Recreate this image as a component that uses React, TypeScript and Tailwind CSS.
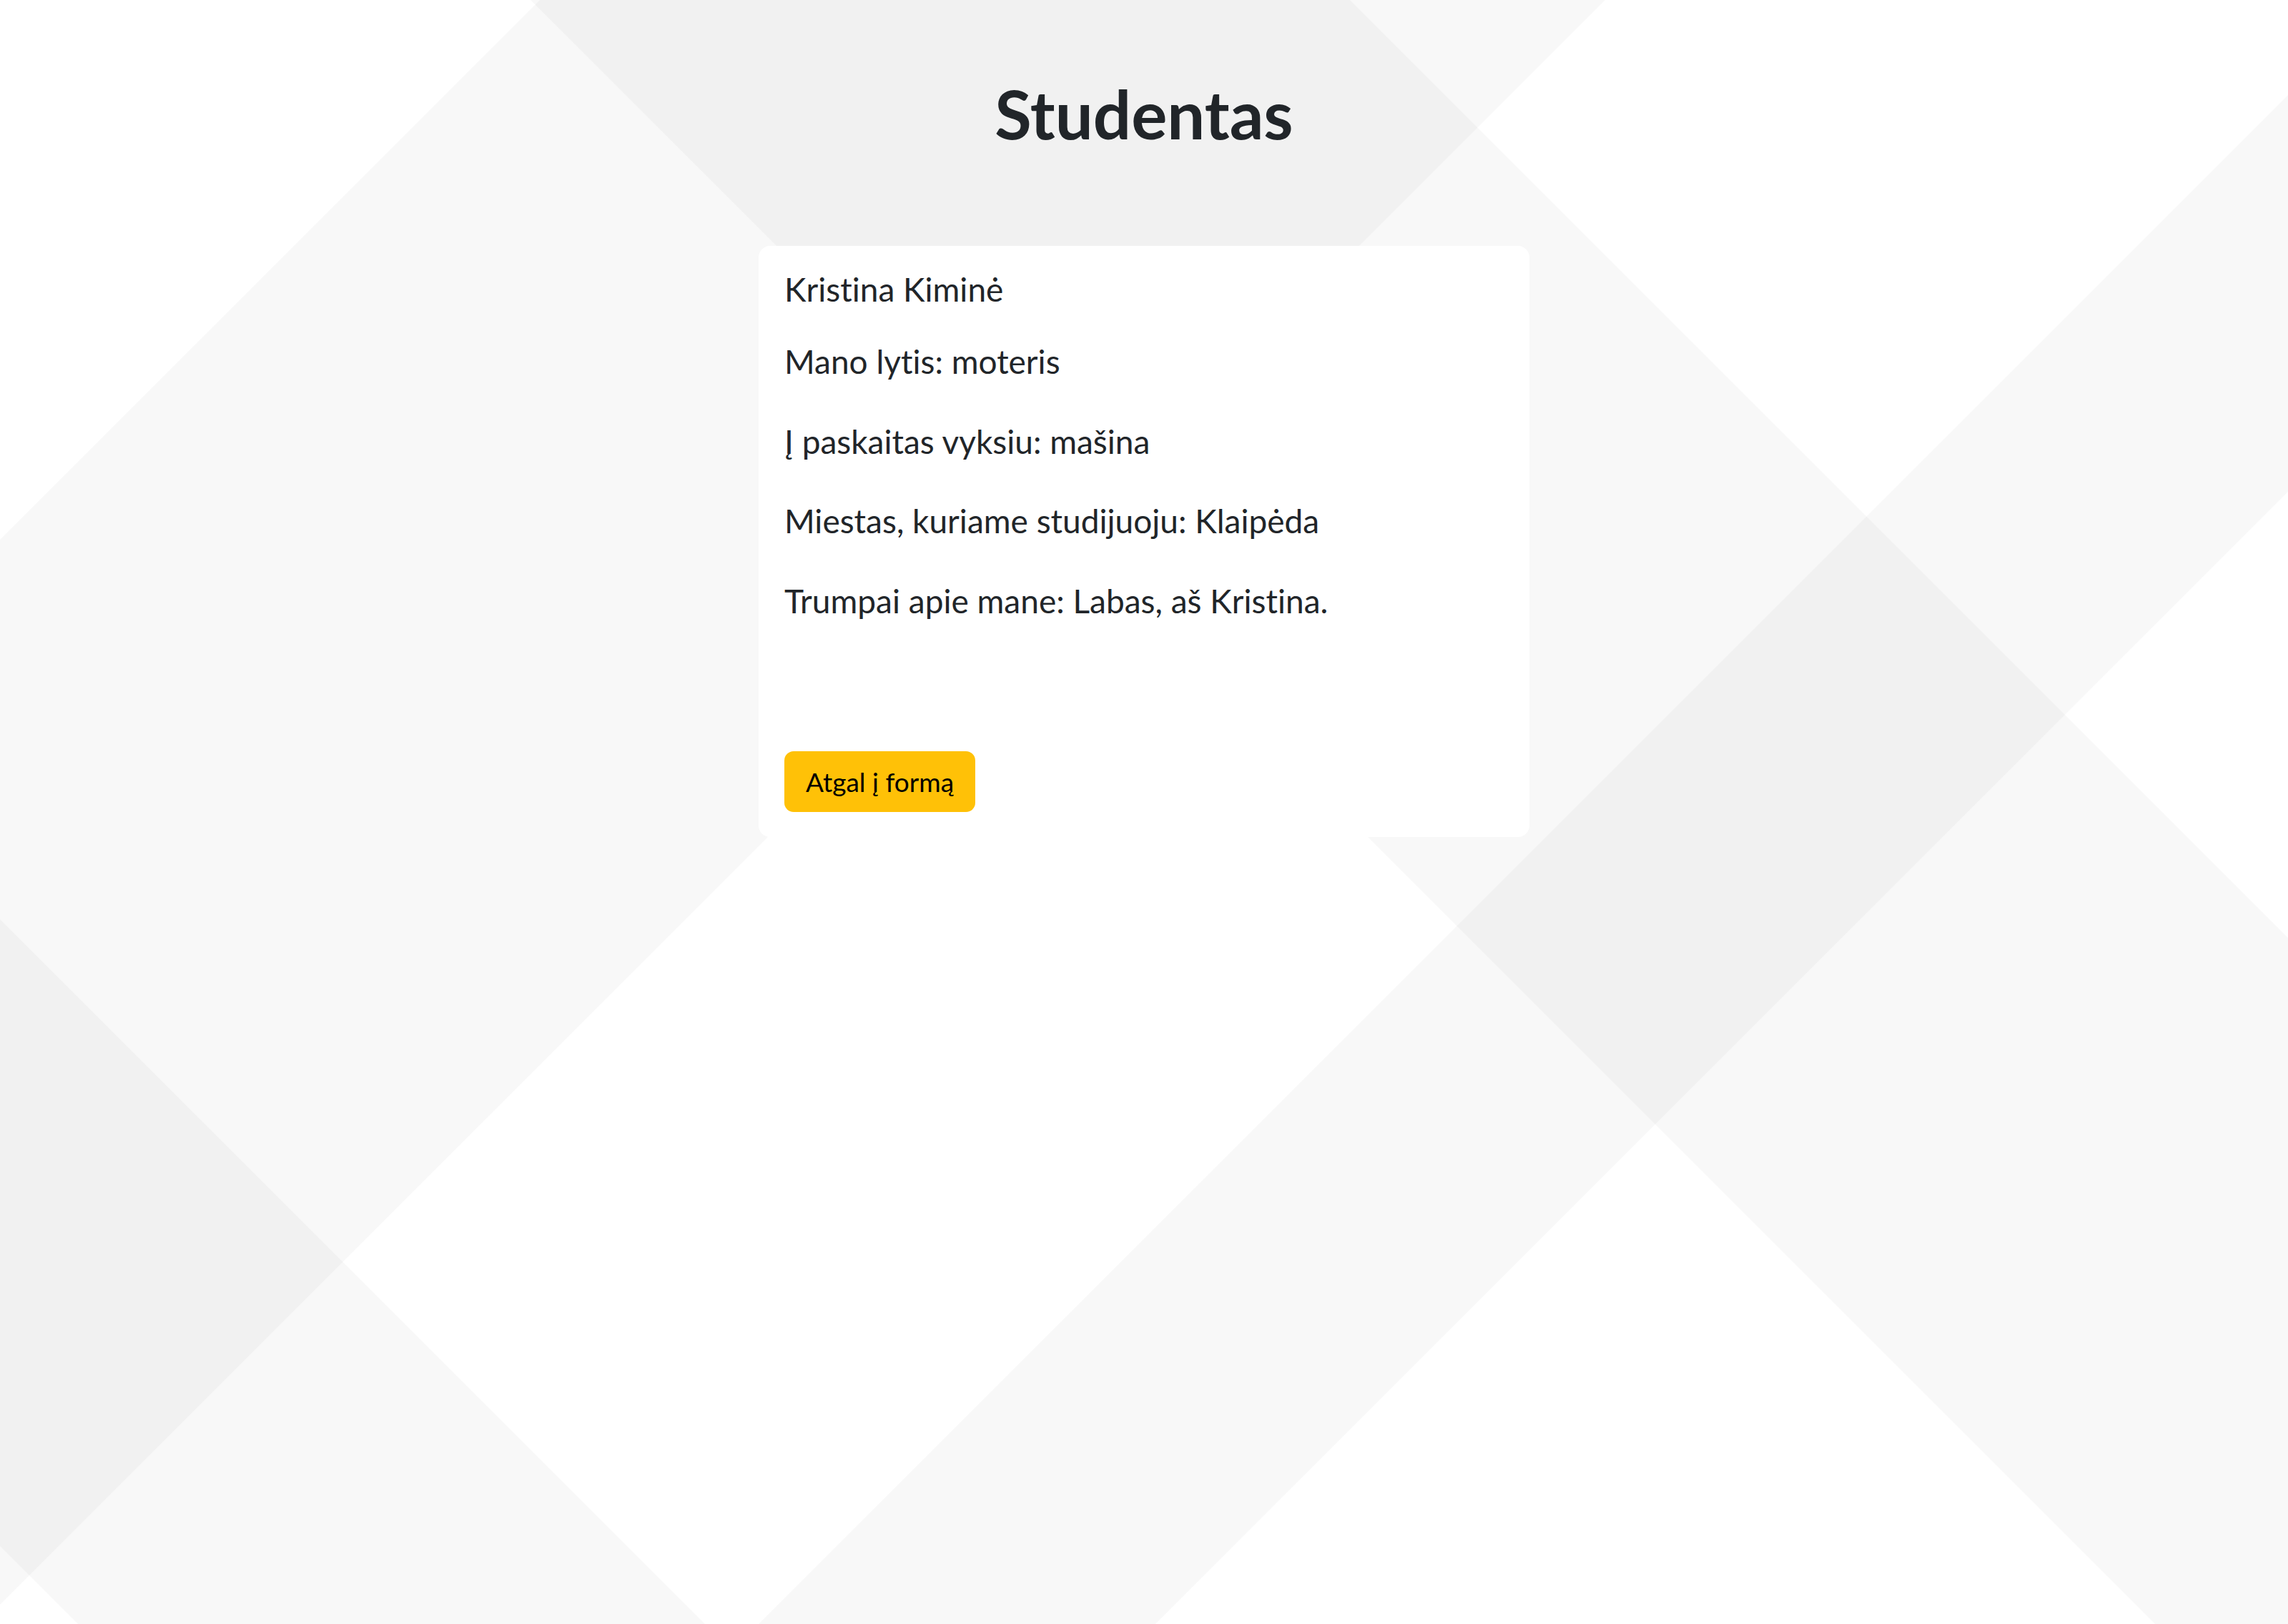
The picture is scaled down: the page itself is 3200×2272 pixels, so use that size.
function Backdrop() {
  return (
    <svg
      className="absolute inset-0 h-full w-full"
      viewBox="0 0 3200 2272"
      preserveAspectRatio="none"
      aria-hidden="true"
    >
      <g fill="#000" fillOpacity="0.029">
        <polygon points="742,0 1888,0 4888,3000 3742,3000" />
        <polygon points="0,1286 0,2163 3000,5163 3000,4286" />
        <polygon points="755,0 2245,0 0,2245 0,755" />
        <polygon points="3333,0 3888,0 0,3888 0,3333" />
      </g>
    </svg>
  )
}

const details = [
  'Mano lytis: moteris',
  'Į paskaitas vyksiu: mašina',
  'Miestas, kuriame studijuoju: Klaipėda',
  'Trumpai apie mane: Labas, aš Kristina.',
]

export default function App() {
  return (
    <div className="relative min-h-screen overflow-hidden bg-white font-['Lato',sans-serif] text-[#212529] [font-variant-ligatures:none]">
      <Backdrop />
      <main className="relative flex flex-col items-center pt-[105px]">
        <h1 className="text-[94px] leading-[108px] font-bold">Studentas</h1>
        <section className="mt-[131px] w-[1078px] rounded-[16px] bg-white px-[36px] pt-[34px] pb-[35px]">
          <h5 className="text-[46px] leading-[54px]">Kristina Kiminė</h5>
          <div className="mt-[40px] flex flex-col gap-[44px]">
            {details.map((line) => (
              <p key={line} className="text-[46px] leading-[67.5px]">
                {line}
              </p>
            ))}
          </div>
          <button
            type="button"
            className="mt-[177px] h-[85px] rounded-[13px] bg-[#ffc107] px-[30px] text-[37px] leading-[54px] text-black"
          >
            Atgal į formą
          </button>
        </section>
      </main>
    </div>
  )
}
